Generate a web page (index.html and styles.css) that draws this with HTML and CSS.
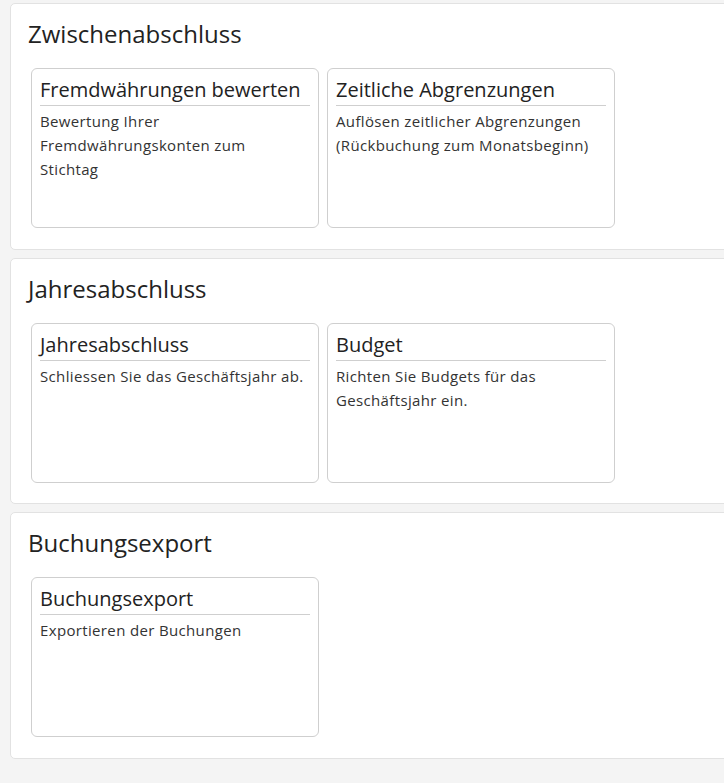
FILE: index.html
```html
<!DOCTYPE html>
<html lang="de">
<head>
<meta charset="utf-8">
<title>Abschluss</title>
<link rel="stylesheet" href="styles.css">
</head>
<body>
<main class="page">
  <section class="panel">
    <h2 class="panel-title">Zwischenabschluss</h2>
    <div class="cards">
      <a class="card">
        <h3 class="card-title">Fremdwährungen bewerten</h3>
        <p class="card-text">Bewertung Ihrer Fremdwährungskonten zum Stichtag</p>
      </a>
      <a class="card">
        <h3 class="card-title">Zeitliche Abgrenzungen</h3>
        <p class="card-text">Auflösen zeitlicher Abgrenzungen (Rückbuchung zum Monatsbeginn)</p>
      </a>
    </div>
  </section>
  <section class="panel">
    <h2 class="panel-title">Jahresabschluss</h2>
    <div class="cards">
      <a class="card">
        <h3 class="card-title">Jahresabschluss</h3>
        <p class="card-text">Schliessen Sie das Geschäftsjahr ab.</p>
      </a>
      <a class="card">
        <h3 class="card-title">Budget</h3>
        <p class="card-text">Richten Sie Budgets für das Geschäftsjahr ein.</p>
      </a>
    </div>
  </section>
  <section class="panel">
    <h2 class="panel-title">Buchungsexport</h2>
    <div class="cards">
      <a class="card">
        <h3 class="card-title">Buchungsexport</h3>
        <p class="card-text">Exportieren der Buchungen</p>
      </a>
    </div>
  </section>
</main>
</body>
</html>
```
FILE: styles.css
```css
html, body {
  margin: 0;
  padding: 0;
  background: #f4f4f4;
  overflow: hidden;
}
body {
  font-family: "Open Sans", "DejaVu Sans", sans-serif;
  color: #2b2b2b;
}
.page {
  padding: 3px 0 0 10px;
  display: flex;
  flex-direction: column;
  gap: 8px;
  width: 760px;
}
.panel {
  background: #fff;
  border: 1px solid #e2e2e2;
  border-radius: 5px;
  padding: 15px 20px 20.5px 17px;
}
.panel-title {
  margin: 0 0 19px 0;
  font-size: 24px;
  font-weight: 400;
  line-height: 30px;
  color: #222;
}
.cards {
  display: flex;
  gap: 8px;
  padding-left: 3px;
}
.card {
  box-sizing: border-box;
  width: 288px;
  height: 160px;
  border: 1px solid #cfcfcf;
  border-radius: 6px;
  padding: 6px 8px 8px 8px;
  display: block;
}
.card-title {
  margin: 0;
  font-size: 20px;
  font-weight: 400;
  line-height: 29px;
  color: #222;
  border-bottom: 1px solid #cfcfcf;
  padding-bottom: 1px;
}
.card-text {
  margin: 3px 0 0 0;
  padding-right: 4px;
  font-size: 15px;
  letter-spacing: 0.35px;
  line-height: 24px;
  color: #333;
}
```
